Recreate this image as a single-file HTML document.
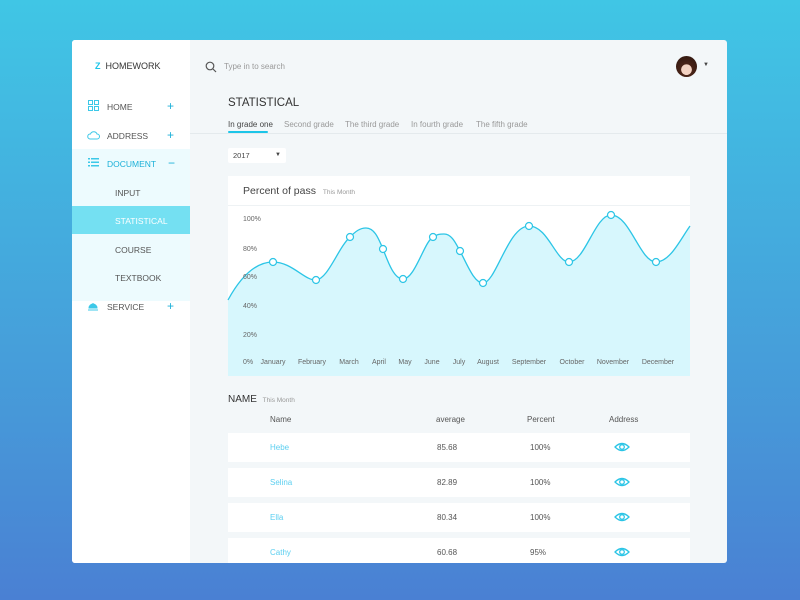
<!DOCTYPE html>
<html><head><meta charset="utf-8"><style>
*{margin:0;padding:0;box-sizing:border-box}
body{width:800px;height:600px;background:linear-gradient(180deg,#40c6e5 0%,#4797d8 70%,#4a80d3 100%);font-family:"Liberation Sans",sans-serif;position:relative;overflow:hidden}
.card{position:absolute;left:72px;top:40px;width:655px;height:523px;background:#f3f7f9;border-radius:3px;overflow:hidden}
.side{position:absolute;left:0;top:0;width:118px;height:523px;background:#fff}
.t{position:absolute;white-space:nowrap}
</style></head><body>
<div class="card">
<div class="side">
 <div class="t" style="left:23px;top:21px;font-size:9px;color:#333"><b style="color:#1cc5e8">Z</b>&nbsp; HOMEWORK</div>
 <svg class="t" style="left:16px;top:60px" width="11" height="11"><g fill="none" stroke="#3cc8e8" stroke-width="1"><rect x="0.5" y="0.5" width="4" height="4"/><rect x="6.5" y="0.5" width="4" height="4"/><rect x="0.5" y="6.5" width="4" height="4"/><rect x="6.5" y="6.5" width="4" height="4"/></g></svg>
 <div class="t" style="left:35px;top:62px;font-size:8.5px;color:#555">HOME</div>
 <div class="t" style="left:95px;top:59px;font-size:12px;color:#1cb0d8">+</div>
 <svg class="t" style="left:15px;top:90px" width="13" height="10"><path d="M3 9h7a2.5 2.5 0 0 0 0-5 3.5 3.5 0 0 0-6.5 0A2.5 2.5 0 0 0 3 9z" fill="none" stroke="#3cc8e8"/></svg>
 <div class="t" style="left:35px;top:91px;font-size:8.5px;color:#555">ADDRESS</div>
 <div class="t" style="left:95px;top:88px;font-size:12px;color:#1cb0d8">+</div>
 <div style="position:absolute;left:0;top:109px;width:118px;height:152px;background:#edfbfe"></div>
 <svg class="t" style="left:16px;top:118px" width="11" height="9"><g fill="#3cc8e8"><rect x="0" y="0" width="2" height="1.5"/><rect x="3" y="0" width="8" height="1.5"/><rect x="0" y="3.5" width="2" height="1.5"/><rect x="3" y="3.5" width="8" height="1.5"/><rect x="0" y="7" width="2" height="1.5"/><rect x="3" y="7" width="8" height="1.5"/></g></svg>
 <div class="t" style="left:35px;top:119px;font-size:8.5px;color:#1cb0d8">DOCUMENT</div>
 <div class="t" style="left:96px;top:116px;font-size:12px;color:#1cb0d8">−</div>
 <div class="t" style="left:43px;top:148px;font-size:8.5px;color:#555">INPUT</div>
 <div style="position:absolute;left:0;top:166px;width:118px;height:28px;background:#74e0f2"></div>
 <div class="t" style="left:43px;top:176px;font-size:8.5px;color:#fff">STATISTICAL</div>
 <div class="t" style="left:43px;top:205px;font-size:8.5px;color:#555">COURSE</div>
 <div class="t" style="left:43px;top:233px;font-size:8.5px;color:#555">TEXTBOOK</div>
 <svg class="t" style="left:15px;top:262px" width="12" height="9"><path d="M1 8h10M2 6a4 4 0 0 1 8 0zM6 1v1" fill="#3cc8e8" stroke="#3cc8e8"/></svg>
 <div class="t" style="left:35px;top:262px;font-size:8.5px;color:#555">SERVICE</div>
 <div class="t" style="left:95px;top:259px;font-size:12px;color:#1cb0d8">+</div>
</div>
<svg class="t" style="left:133px;top:21px" width="12" height="12"><circle cx="5" cy="5" r="3.8" fill="none" stroke="#555" stroke-width="1.2"/><path d="M8 8l3 3" stroke="#555" stroke-width="1.2"/></svg>
<div class="t" style="left:152px;top:22px;font-size:8px;color:#999">Type in to search</div>
<div class="t" style="left:604px;top:16px;width:21px;height:21px;border-radius:50%;background:radial-gradient(circle at 50% 65%,#f3d2c2 0 30%,#4a2418 32%,#2a140e 100%)"></div>
<div class="t" style="left:631px;top:22px;font-size:6px;color:#444">▼</div>
<div class="t" style="left:156px;top:57px;font-size:11.5px;color:#333">STATISTICAL</div>
<div style="position:absolute;left:118px;top:93px;width:537px;height:1px;background:#e4eaed"></div>
<div class="t" style="left:156px;top:80px;font-size:8px;color:#444">In grade one</div>
<div style="position:absolute;left:156px;top:91px;width:40px;height:2px;background:#1cc5e8;border-radius:1px"></div>
<div class="t" style="left:212px;top:80px;font-size:8px;color:#999">Second grade</div>
<div class="t" style="left:273px;top:80px;font-size:8px;color:#999">The third grade</div>
<div class="t" style="left:339px;top:80px;font-size:8px;color:#999">In fourth grade</div>
<div class="t" style="left:404px;top:80px;font-size:8px;color:#999">The fifth grade</div>
<div style="position:absolute;left:156px;top:108px;width:58px;height:15px;background:#fff;border-radius:2px"></div>
<div class="t" style="left:161px;top:111px;font-size:7.5px;color:#444">2017</div>
<div class="t" style="left:203px;top:112px;font-size:6px;color:#444">▼</div>
<div style="position:absolute;left:156px;top:136px;width:462px;height:200px;background:#fff"></div>
<div class="t" style="left:171px;top:145px;font-size:10.5px;color:#444">Percent of pass <span style="font-size:6.5px;color:#999;margin-left:4px">This Month</span></div>
<div style="position:absolute;left:156px;top:165px;width:462px;height:1px;background:#eef2f4"></div>
</div>
<svg style="position:absolute;left:0;top:0" width="800" height="600">
<path d="M228,300 C240,278 255,262 273,262 C292,262 305,281 316,280 C328,279 338,248 350,237 C356,231 360,228 366,228 C375,228 379,240 383,249 C388,262 394,279 403,279 C415,279 424,242 433,237 C438,234 440,234 444,234 C452,234 456,244 460,251 C467,264 474,283 483,283 C496,283 508,226 529,226 C548,226 556,262 569,262 C585,262 595,215 611,215 C630,215 640,262 656,262 C670,262 680,240 690,226 L690,376 L228,376Z" fill="#d7f7fd" stroke="none"/>
<path d="M228,300 C240,278 255,262 273,262 C292,262 305,281 316,280 C328,279 338,248 350,237 C356,231 360,228 366,228 C375,228 379,240 383,249 C388,262 394,279 403,279 C415,279 424,242 433,237 C438,234 440,234 444,234 C452,234 456,244 460,251 C467,264 474,283 483,283 C496,283 508,226 529,226 C548,226 556,262 569,262 C585,262 595,215 611,215 C630,215 640,262 656,262 C670,262 680,240 690,226" fill="none" stroke="#2cc5e6" stroke-width="1.3"/>
<g fill="#fff" stroke="#2cc5e6" stroke-width="1.2">
<circle cx="273" cy="262" r="3.5"/><circle cx="316" cy="280" r="3.5"/><circle cx="350" cy="237" r="3.5"/><circle cx="383" cy="249" r="3.5"/><circle cx="403" cy="279" r="3.5"/><circle cx="433" cy="237" r="3.5"/><circle cx="460" cy="251" r="3.5"/><circle cx="483" cy="283" r="3.5"/><circle cx="529" cy="226" r="3.5"/><circle cx="569" cy="262" r="3.5"/><circle cx="611" cy="215" r="3.5"/><circle cx="656" cy="262" r="3.5"/></g>
<g font-family="Liberation Sans" font-size="7" fill="#666">
<text x="243" y="221">100%</text><text x="243" y="251">80%</text><text x="243" y="279">60%</text><text x="243" y="308">40%</text><text x="243" y="337">20%</text><text x="243" y="364">0%</text>
<g text-anchor="middle"><text x="273" y="364">January</text><text x="312" y="364">February</text><text x="349" y="364">March</text><text x="379" y="364">April</text><text x="405" y="364">May</text><text x="432" y="364">June</text><text x="459" y="364">July</text><text x="488" y="364">August</text><text x="529" y="364">September</text><text x="572" y="364">October</text><text x="613" y="364">November</text><text x="658" y="364">December</text></g>
</g>
</svg>
<div class="t" style="left:228px;top:394px;font-size:10px;color:#333">NAME <span style="font-size:6.5px;color:#999;margin-left:3px">This Month</span></div>
<div class="t" style="left:270px;top:415px;font-size:8px;color:#555">Name</div>
<div class="t" style="left:436px;top:415px;font-size:8px;color:#555">average</div>
<div class="t" style="left:527px;top:415px;font-size:8px;color:#555">Percent</div>
<div class="t" style="left:609px;top:415px;font-size:8px;color:#555">Address</div>
<div style="position:absolute;left:228px;top:433px;width:462px;height:29px;background:#fff"></div>
<div style="position:absolute;left:228px;top:468px;width:462px;height:29px;background:#fff"></div>
<div style="position:absolute;left:228px;top:503px;width:462px;height:29px;background:#fff"></div>
<div style="position:absolute;left:228px;top:538px;width:462px;height:25px;background:#fff"></div>
<div class="t" style="left:270px;top:443px;font-size:8px;color:#5ccff0">Hebe</div>
<div class="t" style="left:270px;top:478px;font-size:8px;color:#5ccff0">Selina</div>
<div class="t" style="left:270px;top:513px;font-size:8px;color:#5ccff0">Ella</div>
<div class="t" style="left:270px;top:548px;font-size:8px;color:#5ccff0">Cathy</div>
<div class="t" style="left:437px;top:443px;font-size:8px;color:#555">85.68</div>
<div class="t" style="left:437px;top:478px;font-size:8px;color:#555">82.89</div>
<div class="t" style="left:437px;top:513px;font-size:8px;color:#555">80.34</div>
<div class="t" style="left:437px;top:548px;font-size:8px;color:#555">60.68</div>
<div class="t" style="left:530px;top:443px;font-size:8px;color:#555">100%</div>
<div class="t" style="left:530px;top:478px;font-size:8px;color:#555">100%</div>
<div class="t" style="left:530px;top:513px;font-size:8px;color:#555">100%</div>
<div class="t" style="left:530px;top:548px;font-size:8px;color:#555">95%</div>
<svg style="position:absolute;left:0;top:0" width="800" height="600"><g fill="none" stroke="#2cc5e6" stroke-width="1.3">
<path d="M615,447 Q622,440 629,447 Q622,454 615,447Z"/><circle cx="622" cy="447" r="2.3"/>
<path d="M615,482 Q622,475 629,482 Q622,489 615,482Z"/><circle cx="622" cy="482" r="2.3"/>
<path d="M615,517 Q622,510 629,517 Q622,524 615,517Z"/><circle cx="622" cy="517" r="2.3"/>
<path d="M615,552 Q622,545 629,552 Q622,559 615,552Z"/><circle cx="622" cy="552" r="2.3"/>
</g></svg>
</body></html>
